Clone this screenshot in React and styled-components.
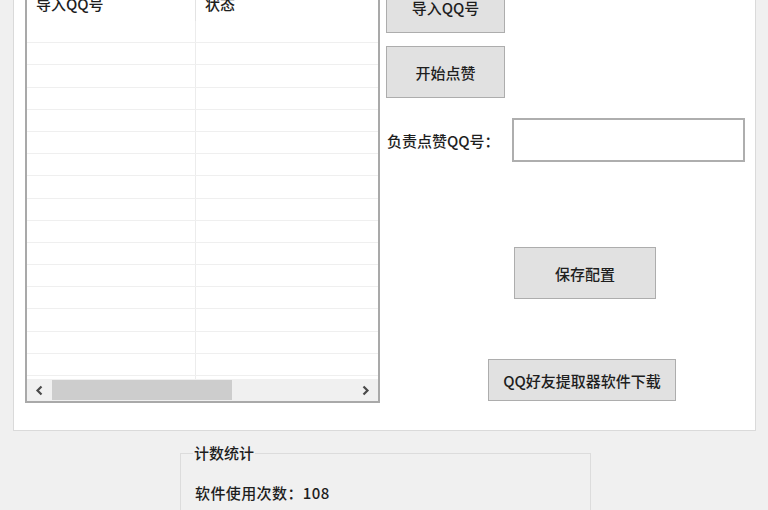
import React from "react";
import styled, { createGlobalStyle } from "styled-components";

const Global = createGlobalStyle`
  html, body { margin: 0; padding: 0; background: #f0f0f0; }
  body { font-family: "Noto Sans CJK SC", "Noto Sans", sans-serif; color: #1e1e1e; }
  #root { width: 768px; height: 510px; overflow: hidden; }
`;

const Page = styled.div`
  width: 768px;
  height: 510px;
  overflow: hidden;
  background: #f0f0f0;
  font-size: 15px;
  font-weight: 500;
`;

const Panel = styled.div`
  margin: -40px 0 0 13px;
  width: 730px;
  background: #fff;
  border: 1px solid #dadada;
  padding: 20px 0 27px 11px;
  display: flex;
  gap: 6px;
  box-sizing: content-box;
`;

const ListView = styled.div`
  width: 351px;
  margin-top: 9px;
  border: 2px solid #a9a9a9;
  display: flex;
  flex-direction: column;
  background: #fff;
`;

const Header = styled.div`
  display: flex;
  height: 29px;
`;

const HeaderCell = styled.div`
  width: ${(p) => p.$w};
  flex: ${(p) => (p.$grow ? 1 : "none")};
  padding: 0 0 6px 9px;
  display: flex;
  align-items: center;
  box-sizing: border-box;
  border-right: ${(p) => (p.$sep ? "1px solid #e3e3e3" : "none")};
  line-height: 18px;
`;

const Body = styled.div`
  height: 358px;
  overflow: hidden;
`;

const Row = styled.div`
  display: flex;
  height: 22.2px;
  box-sizing: border-box;
  border-bottom: 1px solid #efefef;
`;

const Cell = styled.div`
  width: ${(p) => p.$w};
  flex: ${(p) => (p.$grow ? 1 : "none")};
  box-sizing: border-box;
  border-right: ${(p) => (p.$sep ? "1px solid #ececec" : "none")};
`;

const ScrollBar = styled.div`
  height: 22px;
  background: #f0f0f0;
  display: flex;
  align-items: center;
`;

const Arrow = styled.div`
  width: 25px;
  height: 22px;
  display: flex;
  align-items: center;
  justify-content: center;
  flex: none;
`;

const Track = styled.div`
  flex: 1;
  height: 20px;
  display: flex;
  align-items: center;
`;

const Thumb = styled.div`
  width: 180px;
  height: 20px;
  background: #cdcdcd;
`;

const RightCol = styled.div`
  display: flex;
  flex-direction: column;
  align-items: flex-start;
`;

const Button = styled.div`
  width: ${(p) => p.$w}px;
  height: ${(p) => p.$h}px;
  margin-top: ${(p) => p.$mt || 0}px;
  margin-left: ${(p) => p.$ml || 0}px;
  box-sizing: border-box;
  background: #e1e1e1;
  border: 1px solid #adadad;
  display: flex;
  align-items: center;
  justify-content: center;
  font-size: 15px;
  white-space: nowrap;
`;

const FieldRow = styled.div`
  display: flex;
  align-items: center;
  margin-top: 20px;
`;

const Label = styled.div`
  width: 125px;
  padding-left: 1px;
  font-size: 15px;
  white-space: nowrap;
`;

const Input = styled.div`
  width: 233px;
  height: 44px;
  box-sizing: border-box;
  border: 2px solid #aeaeae;
  background: #fff;
`;

const Group = styled.fieldset`
  margin: 11px 0 0 180px;
  width: 411px;
  height: 80px;
  box-sizing: border-box;
  border: 1px solid #dcdcdc;
  border-bottom: none;
  padding: 0 0 0 12px;
  min-width: 0;
`;

const Legend = styled.legend`
  padding: 0 1px;
  font-size: 15px;
  line-height: 22px;
`;

const Stat = styled.div`
  margin: 18px 0 0 2px;
  font-size: 15px;
  line-height: 22px;
  letter-spacing: 0.4px;
`;

const Chevron = ({ dir }) => (
  <svg width="9" height="11" viewBox="0 0 9 11">
    <path
      d={dir === "left" ? "M6.5 1.5 L2.5 5.5 L6.5 9.5" : "M2.5 1.5 L6.5 5.5 L2.5 9.5"}
      fill="none"
      stroke="#4a4a4a"
      strokeWidth="2.2"
    />
  </svg>
);

export default function App() {
  const rows = Array.from({ length: 17 });
  return (
    <Page>
      <Global />
      <Panel>
        <ListView>
          <Header>
            <HeaderCell $w="169px" $sep>导入QQ号</HeaderCell>
            <HeaderCell $grow>状态</HeaderCell>
          </Header>
          <Body>
            {rows.map((_, i) => (
              <Row key={i}>
                <Cell $w="169px" $sep />
                <Cell $grow />
              </Row>
            ))}
          </Body>
          <ScrollBar>
            <Arrow>
              <Chevron dir="left" />
            </Arrow>
            <Track>
              <Thumb />
            </Track>
            <Arrow>
              <Chevron dir="right" />
            </Arrow>
          </ScrollBar>
        </ListView>
        <RightCol>
          <Button $w={119} $h={52}>导入QQ号</Button>
          <Button $w={119} $h={52} $mt={13}>开始点赞</Button>
          <FieldRow>
            <Label>负责点赞QQ号：</Label>
            <Input />
          </FieldRow>
          <Button $w={142} $h={52} $mt={85} $ml={128}>保存配置</Button>
          <Button $w={188} $h={42} $mt={60} $ml={102}>QQ好友提取器软件下载</Button>
        </RightCol>
      </Panel>
      <Group>
        <Legend>计数统计</Legend>
        <Stat>软件使用次数：108</Stat>
      </Group>
    </Page>
  );
}
